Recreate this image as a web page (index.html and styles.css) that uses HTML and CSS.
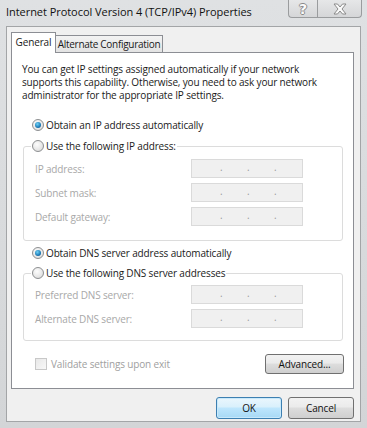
FILE: index.html
```html
<!DOCTYPE html>
<html>
<head>
<meta charset="utf-8">
<link rel="stylesheet" href="styles.css">
</head>
<body>
<div class="window">
  <div class="titlebar">
    <div class="title">Internet Protocol Version 4 (TCP/IPv4) Properties</div>
    <div class="caption-buttons">
      <div class="cap-btn help"><span class="qmark">?</span></div>
      <div class="cap-btn close">
        <svg width="16" height="12" viewBox="0 0 16 12"><path d="M2 1 H5.5 L8 4 L10.5 1 H14 L10 6 L14 11 H10.5 L8 8 L5.5 11 H2 L6 6 Z" fill="#fafafa" stroke="#8a8a8a" stroke-width="1" stroke-linejoin="round"/></svg>
      </div>
    </div>
  </div>
  <div class="client">
    <div class="tabs">
      <div class="tab active">General</div>
      <div class="tab">Alternate Configuration</div>
    </div>
    <div class="panel">
      <p class="intro">You can get IP settings assigned automatically if your network<br>supports this capability. Otherwise, you need to ask your network<br>administrator for the appropriate IP settings.</p>

      <div class="radio-row first"><span class="radio checked"></span><span>Obtain an IP address automatically</span></div>
      <fieldset class="group ip">
        <legend><span class="radio"></span><span>Use the following IP address:</span></legend>
        <div class="field"><span class="label">IP address:</span><span class="ipbox"><i>.</i><i>.</i><i>.</i></span></div>
        <div class="field"><span class="label">Subnet mask:</span><span class="ipbox"><i>.</i><i>.</i><i>.</i></span></div>
        <div class="field"><span class="label">Default gateway:</span><span class="ipbox"><i>.</i><i>.</i><i>.</i></span></div>
      </fieldset>

      <div class="radio-row dns"><span class="radio checked"></span><span>Obtain DNS server address automatically</span></div>
      <fieldset class="group dnsgroup">
        <legend><span class="radio"></span><span>Use the following DNS server addresses</span></legend>
        <div class="field"><span class="label">Preferred DNS server:</span><span class="ipbox"><i>.</i><i>.</i><i>.</i></span></div>
        <div class="field"><span class="label">Alternate DNS server:</span><span class="ipbox"><i>.</i><i>.</i><i>.</i></span></div>
      </fieldset>

      <div class="bottom-row">
        <div class="check"><span class="checkbox"></span><span>Validate settings upon exit</span></div>
        <div class="btn advanced">Advanced...</div>
      </div>
    </div>
    <div class="dialog-buttons">
      <div class="btn ok">OK</div>
      <div class="btn cancel">Cancel</div>
    </div>
  </div>
</div>
</body>
</html>
```
FILE: styles.css
```css
* { box-sizing: border-box; }
html, body { margin: 0; padding: 0; }
body {
  width: 367px;
  height: 428px;
  overflow: hidden;
  background: #d7d9db;
  font-family: "Open Sans", "Noto Sans", sans-serif;
  font-size: 10px;
  letter-spacing: -0.15px;
  color: #1a1a1a;
}
.window {
  width: 367px;
  height: 428px;
  background: linear-gradient(#dfe1e3, #d3d5d7);
  display: flex;
  flex-direction: column;
}
.titlebar {
  height: 26px;
  display: flex;
  align-items: flex-start;
}
.title {
  padding: 4px 0 0 6px;
  font-size: 11px;
  letter-spacing: -0.05px;
  color: #111;
}
.caption-buttons {
  margin-left: auto;
  margin-right: 5px;
  display: flex;
}
.cap-btn {
  height: 18px;
  border: 1px solid #9a9c9e;
  border-top: none;
  background: linear-gradient(#e6e7e8, #d5d6d8);
  display: flex;
  align-items: center;
  justify-content: center;
}
.cap-btn.help {
  width: 29px;
  border-radius: 0 0 0 4px;
  border-right: none;
}
.cap-btn.close {
  width: 45px;
  border-radius: 0 0 4px 0;
}
.qmark {
  font-family: "DejaVu Sans", sans-serif;
  font-size: 14px;
  font-weight: bold;
  color: #fafafa;
  text-shadow: -1px 0 #8a8a8a, 1px 0 #8a8a8a, 0 -1px #8a8a8a, 0 1px #8a8a8a;
  line-height: 1;
}
.client {
  flex: 1;
  margin: 0 6px 6px 6px;
  border: 1px solid #a3a5a7;
  background: #f0f0f0;
  padding: 5px 6px 2px 4px;
  display: flex;
  flex-direction: column;
}
.tabs {
  display: flex;
  align-items: flex-end;
  height: 20px;
  position: relative;
  z-index: 2;
}
.tab {
  height: 17px;
  border: 1px solid #8c8e94;
  border-bottom: none;
  border-left: none;
  background: linear-gradient(#f3f3f3, #e3e3e3);
  width: 107px;
  text-align: center;
  letter-spacing: -0.3px;
  line-height: 16px;
  white-space: nowrap;
}
.tab.active {
  height: 21px;
  border-left: 1px solid #8c8e94;
  background: #fff;
  line-height: 19px;
  margin-bottom: -1px;
  width: 45px;
  letter-spacing: -0.15px;
}
.panel {
  height: 337px;
  background: #fff;
  border: 1px solid #8c8e94;
  padding: 10px 9px 0 10px;
  display: flex;
  flex-direction: column;
}
.intro {
  margin: 0;
  line-height: 13px;
  white-space: nowrap;
}
.radio-row {
  display: flex;
  align-items: center;
  height: 14px;
  padding-left: 10px;
  gap: 2px;
  white-space: nowrap;
}
.radio-row.first { margin-top: 16px; }
.radio-row.dns { margin-top: 5px; }
.radio {
  display: inline-block;
  width: 12px;
  height: 12px;
  border-radius: 50%;
  border: 1px solid #8d8f91;
  background: radial-gradient(circle at 40% 35%, #fdfdfd 0%, #e6e6e6 60%, #cfcfcf 100%);
  position: relative;
  flex: none;
}
.radio.checked::after {
  content: "";
  position: absolute;
  left: 2px;
  top: 2px;
  width: 6px;
  height: 6px;
  border-radius: 50%;
  background: radial-gradient(circle at 40% 35%, #6fd1f5 0%, #1c7bb7 60%, #0d3f77 100%);
}
.group {
  margin: 0 0 0 1px;
  width: 320px;
  border: 1px solid #dcdcdc;
  border-radius: 3px;
  padding: 6px 0 14px 11px;
  min-width: 0;
}
.group legend {
  display: flex;
  align-items: center;
  gap: 2px;
  padding: 0 1px;
  margin-left: -4px;
  height: 14px;
  white-space: nowrap;
}
.group.ip { margin-top: 7px; }
.group.dnsgroup { margin-top: 6px; padding-top: 5px; padding-bottom: 12px; }
.field {
  display: flex;
  align-items: center;
  height: 19px;
  margin-bottom: 5px;
}
.field:last-child { margin-bottom: 0; }
.label {
  width: 156px;
  color: #a8a8a8;
  white-space: nowrap;
}
.ipbox {
  width: 112px;
  height: 19px;
  border: 1px solid #dadada;
  background: #f0f0f0;
  display: flex;
  align-items: center;
  padding-left: 28px;
}
.ipbox i {
  font-style: normal;
  color: #9a9a9a;
  width: 27px;
  line-height: 1;
  position: relative;
  top: -2px;
}
.bottom-row {
  display: flex;
  align-items: center;
  margin-top: 13px;
  height: 20px;
}
.check {
  display: flex;
  align-items: center;
  gap: 4px;
  padding-left: 13px;
  color: #a0a0a0;
}
.checkbox {
  width: 12px;
  height: 12px;
  border: 1px solid #c8c8c8;
  background: linear-gradient(135deg, #e8e8e8, #f8f8f8);
}
.btn {
  height: 22px;
  border: 1px solid #707070;
  border-radius: 3px;
  background: linear-gradient(#f2f2f2 0%, #ebebeb 45%, #dddddd 50%, #cfcfcf 100%);
  display: flex;
  align-items: center;
  justify-content: center;
  color: #111;
}
.btn.advanced {
  margin-left: auto;
  width: 79px;
  height: 20px;
}
.dialog-buttons {
  display: flex;
  justify-content: flex-end;
  gap: 6px;
  margin-top: 8px;
}
.btn.ok, .btn.cancel { width: 66px; }
.btn.ok {
  border-color: #3c7fb1;
  background: linear-gradient(#eaf6fd 0%, #d9f0fc 45%, #bee6fd 50%, #a7d9f5 100%);
  box-shadow: inset 0 0 0 1px #c8e9fb;
}
```
